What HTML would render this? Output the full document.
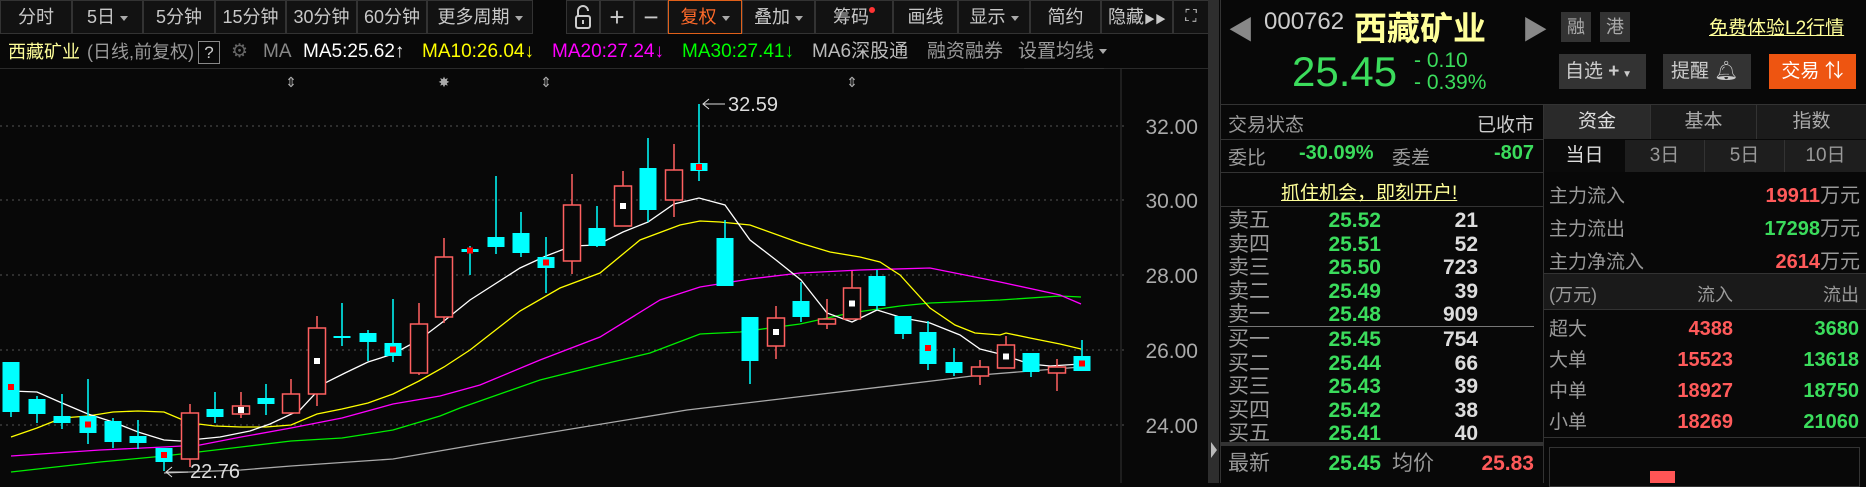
<!DOCTYPE html>
<html><head><meta charset="utf-8"><style>
*{margin:0;padding:0;box-sizing:border-box}
body{width:1866px;height:483px;background:#080808;overflow:hidden;position:relative;font-family:"Liberation Sans","Noto Sans CJK SC",sans-serif;color:#bbb}
.a{position:absolute;white-space:nowrap}
.tb{position:absolute;top:0;height:34px;border:1px solid #333;background:#121212;color:#c8c8c8;font-size:18px;line-height:32px;text-align:center}
.dd:after{content:"";display:inline-block;margin-left:5px;vertical-align:middle;border-left:4px solid transparent;border-right:4px solid transparent;border-top:5px solid #aaa}
.g{color:#3bdc5c}.r{color:#ff5a5a}.w{color:#ddd}
.ob{font-size:21px;line-height:23.5px}
.m{position:absolute;top:40px;font-size:19px;line-height:24px;white-space:nowrap}
</style></head><body>
<div class="tb" style="left:0;width:72px">分时</div>
<div class="tb dd" style="left:72px;width:71px">5日</div>
<div class="tb" style="left:143px;width:72px">5分钟</div>
<div class="tb" style="left:215px;width:71px">15分钟</div>
<div class="tb" style="left:286px;width:71px">30分钟</div>
<div class="tb" style="left:357px;width:70px">60分钟</div>
<div class="tb dd" style="left:427px;width:106px">更多周期</div>
<div class="tb" style="left:566px;width:34px"><svg width="18" height="26" style="margin-top:3px"><path d="M4 12V7a5 5 0 0 1 10 0" stroke="#ccc" stroke-width="2" fill="none"/><rect x="2" y="12" width="14" height="12" rx="2" stroke="#ccc" stroke-width="2" fill="none"/><line x1="9" y1="16" x2="9" y2="20" stroke="#ccc" stroke-width="2"/></svg></div>
<div class="tb" style="left:600px;width:34px;font-size:26px">+</div>
<div class="tb" style="left:634px;width:34px;font-size:26px">−</div>
<div class="tb dd" style="left:668px;width:74px;border-color:#e0601a;color:#ff6a2a">复权</div>
<div class="tb dd" style="left:742px;width:73px">叠加</div>
<div class="tb" style="left:815px;width:78px">筹码<span style="display:inline-block;width:6px;height:6px;border-radius:3px;background:#f33;vertical-align:top;margin-top:6px"></span></div>
<div class="tb" style="left:893px;width:65px">画线</div>
<div class="tb dd" style="left:958px;width:72px">显示</div>
<div class="tb" style="left:1030px;width:71px">简约</div>
<div class="tb" style="left:1101px;width:72px">隐藏<span style="font-size:11px">▶▶</span></div>
<div class="tb" style="left:1173px;width:36px;font-size:16px">⛶</div>
<div class="a" style="left:0;top:34px;width:1219px;height:35px;border-bottom:1px solid #2a2a2a"></div>
<div class="m" style="left:8px;color:#ffff9a;font-size:18px">西藏矿业</div>
<div class="m" style="left:87px;color:#999;font-size:18px">(日线,前复权)</div>
<div class="m" style="left:198px;top:41px;width:22px;height:23px;border:1px solid #888;text-align:center;line-height:21px;font-size:17px;color:#ccc">?</div>
<div class="m" style="left:231px;color:#666">⚙</div>
<div class="m" style="left:263px;color:#888">MA</div>
<div class="m" style="left:303px;color:#fff">MA5:25.62↑</div>
<div class="m" style="left:422px;color:#ffff00">MA10:26.04↓</div>
<div class="m" style="left:552px;color:#ff00ff">MA20:27.24↓</div>
<div class="m" style="left:682px;color:#00ff00">MA30:27.41↓</div>
<div class="m" style="left:812px;color:#bbb">MA6深股通</div>
<div class="m" style="left:927px;color:#999">融资融券</div>
<div class="m dd" style="left:1018px;color:#999;font-size:19px">设置均线</div>
<div class="a" style="left:1024px;top:68px;width:80px;border-top:1px solid #333"></div>
<svg class="a" style="left:0;top:0" width="1219" height="483">
<g stroke="#555" stroke-dasharray="2 4" stroke-width="1">
<line x1="0" y1="126" x2="1125" y2="126"/><line x1="0" y1="200" x2="1125" y2="200"/><line x1="0" y1="275" x2="1125" y2="275"/><line x1="0" y1="350" x2="1125" y2="350"/><line x1="0" y1="425" x2="1125" y2="425"/></g>
<line x1="1121" y1="69" x2="1121" y2="483" stroke="#333"/>
<rect x="1208" y="0" width="12" height="483" fill="#2e2e2e"/>
<polygon points="1211,442 1217,450 1211,458" fill="#bbb"/>
<g fill="#aaa" font-size="21" font-family="Liberation Sans" text-anchor="end">
<text x="1198" y="134">32.00</text><text x="1198" y="208">30.00</text><text x="1198" y="283">28.00</text><text x="1198" y="358">26.00</text><text x="1198" y="433">24.00</text></g>
<g fill="#aaa" font-size="14" text-anchor="middle"><text x="291" y="87">⇕</text><text x="444" y="87">✸</text><text x="546" y="87">⇕</text><text x="852" y="87">⇕</text></g>
<g fill="none" stroke-width="1.3">
<polyline stroke="#aaa" points="164,473 241,470 291,466 393,459 480,444 687,410 940,380 980,375 1030,371 1081,367"/>
<polyline stroke="#00ee00" points="11,472 100,462 164,456 241,447 291,441 342,438 393,430 440,416 460,408 540,380 600,365 650,353 700,334 740,332 800,324 850,313 900,306 930,303 1000,300 1060,296 1081,297"/>
<polyline stroke="#ff00ff" points="11,456 100,450 164,447 200,445 241,437 291,428 342,418 393,404 440,396 480,385 540,360 600,337 660,300 700,287 750,279 800,273 860,270 930,268 1000,282 1060,295 1081,304"/>
<polyline stroke="#ffff00" points="11,437 37,428 62,418 88,416 113,412 138,411 164,412 190,423 215,426 241,427 266,427 291,425 317,414 342,409 368,403 393,394 419,381 444,367 470,350 520,311 560,288 600,273 640,240 680,225 700,221 720,222 750,225 800,243 830,252 860,257 880,262 900,275 930,308 955,325 975,333 1000,335 1006,333 1030,338 1060,344 1081,349"/>
<polyline stroke="#fff" points="11,391 37,392 62,403 88,414 113,422 138,432 164,440 180,441 200,439 220,437 250,431 270,424 300,410 325,383 345,373 368,362 393,354 419,340 444,321 470,300 520,268 546,256 572,246 597,245 623,232 648,222 674,204 699,198 725,205 750,240 776,260 801,280 827,313 852,322 877,310 903,318 930,323 960,335 980,349 1000,354 1030,364 1050,366 1081,364"/>
</g>
<g id="c" stroke-width="1.5"></g>
<g stroke="#ddd" fill="none"><line x1="703" y1="104" x2="725" y2="104"/><polyline points="709,99 703,104 709,109"/><line x1="166" y1="472" x2="188" y2="472"/><polyline points="172,467 166,472 172,477"/></g>
<text x="728" y="111" fill="#ddd" font-size="20" font-family="Liberation Sans">32.59</text>
<text x="190" y="478" fill="#ddd" font-size="20" font-family="Liberation Sans">22.76</text>
</svg>
<script>
var d=[[11,'c',362,412,362,417,'r'],[37,'c',399,414,396,423],[62,'c',416,423,394,429],[88,'c',416,433,379,444,'r'],[113,'c',421,442,418,448],[138,'c',436,443,420,449],[164,'c',448,462,448,471,'r'],[190,'r',413,459,404,467],[215,'c',409,417,392,423],[241,'r',406,414,392,418,'w'],[266,'c',398,404,384,415],[291,'r',394,413,379,413],[317,'r',328,394,316,406,'w'],[342,'c',336,338,303,346],[368,'c',333,342,330,361],[393,'c',343,356,299,362,'r'],[419,'r',324,373,303,375],[444,'r',257,317,238,323],[470,'c',249,252,246,275,'r'],[496,'c',237,247,176,254],[521,'c',233,253,212,257],[546,'c',257,268,237,293,'r'],[572,'r',205,261,174,274],[597,'c',228,246,206,247],[623,'r',186,226,171,226,'w'],[648,'c',168,210,138,222],[674,'r',170,200,144,217],[699,'c',163,171,104,181,'r'],[725,'c',238,286,220,286],[750,'c',317,361,317,384],[776,'r',318,346,306,359,'w'],[801,'c',301,317,282,322],[827,'r',319,324,299,329],[852,'r',288,319,271,319,'w'],[877,'c',276,306,270,310],[903,'c',316,334,316,339],[928,'c',332,364,321,370,'r'],[954,'c',362,373,348,376],[980,'r',367,376,360,385],[1006,'r',345,368,336,368,'w'],[1031,'c',353,372,353,377],[1057,'r',367,373,359,391],[1082,'c',356,371,340,371,'r']];
var s='';d.forEach(function(k){var x=k[0],up=k[1]=='r',col=up?'#ff6060':'#00ffff';
s+='<line x1="'+x+'" y1="'+k[4]+'" x2="'+x+'" y2="'+k[5]+'" stroke="'+col+'"/>';
var h=Math.max(k[3]-k[2],2);
s+='<rect x="'+(x-8.5)+'" y="'+k[2]+'" width="17" height="'+h+'" fill="'+(up?'#080808':col)+'" stroke="'+(up?col:'none')+'"/>';
if(k[6])s+='<rect x="'+(x-3)+'" y="'+((k[2]+k[3])/2-3)+'" width="6" height="6" fill="'+(k[6]=='r'?'#ff0000':'#fff')+'" stroke="none"/>';});
document.getElementById('c').innerHTML=s;
</script>
<div class="a" style="left:1220px;top:0;width:646px;height:483px;background:#080808;border-left:1px solid #333"></div>
<div class="a" style="left:1228px;top:10px;font-size:26px;color:#888">◀</div>
<div class="a" style="left:1264px;top:8px;font-size:24px;color:#ccc">000762</div>
<div class="a" style="left:1354px;top:2px;font-size:33px;color:#ffff9a;font-weight:bold">西藏矿业</div>
<div class="a" style="left:1522px;top:10px;font-size:26px;color:#888">▶</div>
<div class="a" style="left:1561px;top:12px;width:30px;height:30px;background:#333;color:#aaa;font-size:18px;line-height:30px;text-align:center">融</div>
<div class="a" style="left:1600px;top:12px;width:30px;height:30px;background:#333;color:#aaa;font-size:18px;line-height:30px;text-align:center">港</div>
<div class="a" style="left:1709px;top:13px;font-size:19px;color:#ffff99;text-decoration:underline">免费体验L2行情</div>
<div class="a g" style="left:1292px;top:48px;font-size:42px">25.45</div>
<div class="a g" style="left:1414px;top:50px;font-size:21px;line-height:22px">- 0.10<br>- 0.39%</div>
<div class="a" style="left:1559px;top:54px;width:87px;height:35px;background:#333;color:#ccc;font-size:19px;line-height:35px;padding-left:6px">自选 <b>+</b><span style="font-size:10px"> ▼</span></div>
<div class="a" style="left:1663px;top:54px;width:88px;height:35px;background:#333;color:#ccc;font-size:19px;line-height:35px;padding-left:8px">提醒 🔔︎</div>
<div class="a" style="left:1769px;top:54px;width:87px;height:35px;background:#ee5511;color:#fff;font-size:19px;line-height:35px;text-align:center">交易 ⇅</div>
<div class="a" style="left:1220px;top:104px;width:646px;border-top:1px solid #333"></div>
<div class="a" style="left:1543px;top:104px;height:379px;border-left:1px solid #333"></div>
<div class="a" style="left:1228px;top:110px;font-size:19px;color:#999">交易状态</div>
<div class="a" style="left:1460px;top:110px;width:74px;text-align:right;font-size:19px;color:#ccc">已收市</div>
<div class="a" style="left:1220px;top:139px;width:323px;border-top:1px solid #333"></div>
<div class="a" style="left:1228px;top:143px;font-size:19px;color:#999">委比</div>
<div class="a g" style="left:1299px;top:142px;font-size:20px;font-weight:bold">-30.09%</div>
<div class="a" style="left:1392px;top:143px;font-size:19px;color:#999">委差</div>
<div class="a g" style="left:1460px;top:142px;width:74px;text-align:right;font-size:20px;font-weight:bold">-807</div>
<div class="a" style="left:1220px;top:172px;width:323px;border-top:1px solid #333"></div>
<div class="a" style="left:1281px;top:178px;font-size:19px;color:#ffff99;text-decoration:underline">抓住机会，即刻开户!</div>
<div class="a" style="left:1220px;top:206px;width:323px;border-top:1px solid #333"></div>
<div class="a ob" style="left:1228px;top:209px;color:#999">卖五<br>卖四<br>卖三<br>卖二<br>卖一</div>
<div class="a ob g" style="left:1300px;top:209px;width:81px;text-align:right;font-weight:bold">25.52<br>25.51<br>25.50<br>25.49<br>25.48</div>
<div class="a ob w" style="left:1400px;top:209px;width:78px;text-align:right;font-weight:bold">21<br>52<br>723<br>39<br>909</div>
<div class="a" style="left:1228px;top:326px;width:306px;border-top:1px solid #777"></div>
<div class="a ob" style="left:1228px;top:328px;color:#999">买一<br>买二<br>买三<br>买四<br>买五</div>
<div class="a ob g" style="left:1300px;top:328px;width:81px;text-align:right;font-weight:bold">25.45<br>25.44<br>25.43<br>25.42<br>25.41</div>
<div class="a ob w" style="left:1400px;top:328px;width:78px;text-align:right;font-weight:bold">754<br>66<br>39<br>38<br>40</div>
<div class="a" style="left:1220px;top:442px;width:323px;height:4px;background:#333"></div>
<div class="a ob" style="left:1228px;top:452px;color:#999">最新</div>
<div class="a ob g" style="left:1300px;top:452px;width:81px;text-align:right;font-weight:bold">25.45</div>
<div class="a ob" style="left:1392px;top:452px;color:#999">均价</div>
<div class="a ob r" style="left:1440px;top:452px;width:94px;text-align:right;font-weight:bold">25.83</div>
<div class="a" style="left:1544px;top:105px;width:106px;height:34px;background:#2a2a2a;color:#ddd;font-size:19px;line-height:34px;text-align:center">资金</div>
<div class="a" style="left:1650px;top:105px;width:106px;height:34px;background:#1b1b1b;border-left:1px solid #333;color:#aaa;font-size:19px;line-height:34px;text-align:center">基本</div>
<div class="a" style="left:1756px;top:105px;width:110px;height:34px;background:#1b1b1b;border-left:1px solid #333;color:#aaa;font-size:19px;line-height:34px;text-align:center">指数</div>
<div class="a" style="left:1544px;top:140px;width:81px;height:32px;background:#0a0a0a;color:#ddd;font-size:19px;line-height:32px;text-align:center">当日</div>
<div class="a" style="left:1625px;top:140px;width:79px;height:32px;background:#1e1e1e;color:#999;font-size:19px;line-height:32px;text-align:center">3日</div>
<div class="a" style="left:1704px;top:140px;width:80px;height:32px;background:#1e1e1e;border-left:1px solid #333;color:#999;font-size:19px;line-height:32px;text-align:center">5日</div>
<div class="a" style="left:1784px;top:140px;width:82px;height:32px;background:#1e1e1e;border-left:1px solid #333;color:#999;font-size:19px;line-height:32px;text-align:center">10日</div>
<div class="a" style="left:1549px;top:180px;font-size:19px;line-height:33px;color:#999">主力流入<br>主力流出<br>主力净流入</div>
<div class="a" style="left:1700px;top:180px;width:160px;text-align:right;font-size:20px;line-height:33px;font-weight:bold"><span class="r">19911</span><span style="color:#999;font-weight:normal">万元</span><br><span class="g">17298</span><span style="color:#999;font-weight:normal">万元</span><br><span class="r">2614</span><span style="color:#999;font-weight:normal">万元</span></div>
<div class="a" style="left:1544px;top:273px;width:322px;height:37px;background:#1a1a1a;border-top:1px solid #333;border-bottom:1px solid #333"></div>
<div class="a" style="left:1549px;top:281px;font-size:18px;color:#999">(万元)</div>
<div class="a" style="left:1680px;top:281px;width:53px;text-align:right;font-size:18px;color:#999">流入</div>
<div class="a" style="left:1800px;top:281px;width:59px;text-align:right;font-size:18px;color:#999">流出</div>
<div class="a" style="left:1549px;top:314px;font-size:19px;line-height:31px;color:#999">超大<br>大单<br>中单<br>小单</div>
<div class="a r" style="left:1633px;top:314px;width:100px;text-align:right;font-size:20px;line-height:31px;font-weight:bold">4388<br>15523<br>18927<br>18269</div>
<div class="a g" style="left:1759px;top:314px;width:100px;text-align:right;font-size:20px;line-height:31px;font-weight:bold">3680<br>13618<br>18750<br>21060</div>
<div class="a" style="left:1544px;top:437px;width:322px;border-top:1px solid #333"></div>
<div class="a" style="left:1549px;top:447px;width:311px;height:40px;border:1px solid #333"></div>
<div class="a" style="left:1650px;top:471px;width:25px;height:12px;background:#ff5555"></div>
</body></html>
